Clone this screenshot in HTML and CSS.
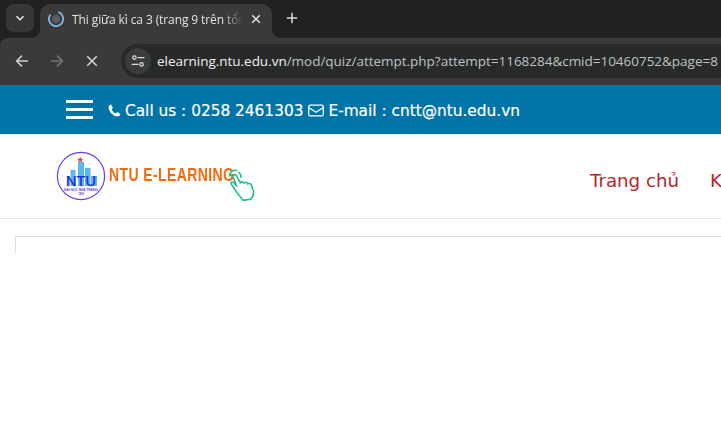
FILE: index.html
```html
<!DOCTYPE html>
<html lang="vi">
<head>
<meta charset="utf-8">
<title>Thi giữa kì ca 3</title>
<link rel="stylesheet" href="styles.css">
</head>
<body>
<div class="chrome">
<div class="tabstrip">
  <div class="tablist-btn">
    <svg width="12" height="12" viewBox="0 0 12 12"><path d="M2.500 4.200 6 7.700l3.500-3.500" fill="none" stroke="#e3e3e3" stroke-width="1.600"/></svg>
  </div>
  <div class="tab">
    <svg class="spinner" width="18" height="18" viewBox="0 0 18 18"><circle cx="9" cy="9" r="4.200" fill="#5a5d61"/><path d="M11.500 2.200A7.200 7.200 0 1 1 3.400 4.500" fill="none" stroke="#8ab4e8" stroke-width="1.800"/></svg>
    <span class="tab-title">Thi giữa kì ca 3 (trang 9 trên tổng</span>
    <svg class="tab-close" width="10" height="10" viewBox="0 0 10 10"><path d="M1.200 1.200l7.600 7.600M8.800 1.200 1.200 8.800" stroke="#e3e3e3" stroke-width="1.500"/></svg>
  </div>
  <svg class="newtab" width="12" height="12" viewBox="0 0 12 12"><path d="M6 .8v10.400M.8 6h10.400" stroke="#dcdcdc" stroke-width="1.500"/></svg>
</div>
<div class="toolbar">
  <svg class="nav" width="14" height="14" viewBox="0 0 14 14"><path d="M13 7H2M7 1.600 1.600 7 7 12.400" fill="none" stroke="#d0d0d0" stroke-width="1.500"/></svg>
  <svg class="nav" width="14" height="14" viewBox="0 0 14 14"><path d="M1 7h11M7 1.600 12.400 7 7 12.400" fill="none" stroke="#757575" stroke-width="1.500"/></svg>
  <svg class="nav" width="14" height="14" viewBox="0 0 14 14"><path d="M2.200 2.200l9.600 9.600M11.800 2.200l-9.600 9.600" stroke="#d0d0d0" stroke-width="1.600"/></svg>
  <div class="omnibox">
    <div class="site-info">
      <svg width="14" height="12" viewBox="0 0 14 12"><circle cx="3.400" cy="2.600" r="1.700" fill="none" stroke="#dedede" stroke-width="1.200"/><path d="M6.600 2.600H13.400M.6 9.400h7" stroke="#dedede" stroke-width="1.400"/><circle cx="10.600" cy="9.400" r="1.700" fill="none" stroke="#dedede" stroke-width="1.200"/></svg>
    </div>
    <div class="url"><span class="host">elearning.ntu.edu.vn</span>/mod/quiz/attempt.php?attempt=1168284&amp;cmid=10460752&amp;page=8</div>
  </div>
</div>
</div>
<div class="topbar">
  <div class="burger"><i></i><i></i><i></i></div>
  <div class="contact">
    <svg width="13" height="13" viewBox="0 0 13 13"><path d="M3.100.6 4.900 3.900 3.600 5.300C4.300 7 5.900 8.700 7.700 9.400l1.400-1.300 3.300 1.800c-.3 1.500-1.300 2.500-2.600 2.600C5.200 12.300.8 7.800.5 3.200.6 1.900 1.600.9 3.100.6Z" fill="#fff"/></svg>
    <span>Call us : 0258 2461303</span>
    <svg class="mail" width="16" height="13" viewBox="0 0 16 13"><rect x=".7" y="1.200" width="14.600" height="10.600" rx="1.500" fill="none" stroke="#fff" stroke-width="1.300"/><path d="M1 3.800 8 8.200l7-4.400" fill="none" stroke="#fff" stroke-width="1.300"/></svg>
    <span>E-mail : cntt@ntu.edu.vn</span>
  </div>
</div>
<header class="site-header">
  <div class="brand">
    <svg class="logo" width="50" height="50" viewBox="0 0 50 50">
      <circle cx="25" cy="25" r="23.600" fill="#fff" stroke="#6a3df0" stroke-width="1.200"/>
      <path d="M24.200 5.500l1 2.200 2.200.2-1.700 1.400.6 2.200-2.100-1.200-2 1.200.6-2.200-1.700-1.400 2.200-.2Z" fill="#e0443a"/>
      <path d="M11 35V25h3v10Z M14.500 35V19H19.500V35Z M22 35V11H28V35Z M29 35V17H34.500V35Z M35 35V25H41V35Z" fill="#5cb8ec"/>
      <text class="logo-ntu" x="25" y="35" text-anchor="middle">NTU</text>
      <text class="logo-name" x="25" y="39.500" text-anchor="middle">ĐẠI HỌC NHA TRANG</text>
      <text class="logo-year" x="25" y="44" text-anchor="middle">1959</text>
    </svg>
    <span class="brand-name">NTU E-LEARNING</span>
    <svg class="hand" width="32" height="34" viewBox="0 0 30 32" fill="none" stroke="#1fbf8c" stroke-width="1.500" stroke-linejoin="round" stroke-linecap="round">
      <path d="M2.500 6.500A5 5 0 0 1 9 1.500M11 3.200A5 5 0 0 1 13 8"/>
      <path d="M10 23 4 14.500c-1-2 1-3 2.500-1.500L9 16 5.500 7.500C5 5 8 4.500 9 6.500l3.500 6.500c.5-1.500 3-1.500 3.500.5.5-1.500 3-1.300 3.500.7.8-1 3-.7 3.500 1.300L25 21c.3 3-1 5.500-2.800 7.500L15 29.500Z"/>
    </svg>
  </div>
  <nav class="menu">
    <a class="menu-item">Trang chủ</a>
    <a class="menu-item">Khóa học</a>
  </nav>
</header>
<main class="content">
  <div class="panel"></div>
</main>
</body>
</html>
```

FILE: styles.css
```css
* { box-sizing: border-box; }
html, body { margin: 0; height: 100%; }
body { width: 721px; height: 440px; overflow: hidden; background: #fff; font-family: "Open Sans", sans-serif; }

.chrome { background: #202222; }
.tabstrip { height: 38px; display: flex; align-items: flex-end; padding-left: 6px; }
.tablist-btn { width: 28px; height: 28px; margin-bottom: 6px; background: #363737; border-radius: 8px; display: flex; align-items: center; justify-content: center; }
.tab { width: 232px; height: 34px; margin-left: 6px; background: #3a3a3a; border-radius: 10px 10px 0 0; display: flex; align-items: center; padding: 0 11px 4px 7px; position: relative; }
.tab::before, .tab::after { content: ""; position: absolute; bottom: 0; width: 8px; height: 8px; }
.tab::before { left: -8px; background: radial-gradient(circle at 0 0, transparent 7.500px, #3a3a3a 8px); }
.tab::after { right: -8px; background: radial-gradient(circle at 100% 0, transparent 7.500px, #3a3a3a 8px); }
.spinner { flex: none; margin-right: 7px; }
.tab-title { flex: 1; min-width: 0; overflow: hidden; white-space: nowrap; color: #e3e3e3; font: 12px "Open Sans", sans-serif; letter-spacing: -.1px; -webkit-mask-image: linear-gradient(to right, #000 88%, transparent); mask-image: linear-gradient(to right, #000 88%, transparent); }
.tab-close { flex: none; margin-left: 8px; }
.newtab { margin: 0 0 14px 14px; }

.toolbar { height: 47px; background: #3a3a3a; border-radius: 8px 0 0 0; display: flex; align-items: flex-start; padding: 6px 0 0 15px; }
.nav { flex: none; margin: 10px 21px 0 0; }
.nav:nth-child(3) { margin-right: 22px; }
.omnibox { flex: 1; height: 34px; background: #282a2a; border-radius: 17px 0 0 17px; display: flex; align-items: center; padding-left: 4px; min-width: 0; }
.site-info { width: 26px; height: 26px; border-radius: 50%; background: #3a3c3c; display: flex; align-items: center; justify-content: center; flex: none; }
.url { margin-left: 6px; white-space: nowrap; color: #bfc2c5; font: 13.5px "Open Sans", sans-serif; letter-spacing: -.02px; }
.host { color: #f0f0f0; }

.topbar { height: 49px; background: #0074a6; display: flex; align-items: center; padding-left: 66px; color: #fff; }
.burger { width: 27px; display: flex; flex-direction: column; gap: 5px; }
.burger i { display: block; height: 3px; background: #fff; }
.contact { margin-left: 15px; padding-top: 2px; display: flex; align-items: center; font: 15.350px "DejaVu Sans", sans-serif; -webkit-text-stroke: .2px #fff; white-space: nowrap; }
.contact span { margin-left: 4px; }
.contact .mail { margin-left: 5px; }

.site-header { height: 85px; border-bottom: 1px solid #e4e4e4; display: flex; align-items: flex-start; box-shadow: inset 0 3px 3px -3px rgba(0,0,0,.12); overflow: hidden; }
.brand { margin: 17px 0 0 56px; width: 200px; display: flex; align-items: flex-start; flex: none; position: relative; }
.logo { flex: none; }
.logo-ntu { font: 14.500px "Liberation Sans", sans-serif; fill: #2222e6; stroke: #2222e6; stroke-width: .25px; }
.logo-name { font: 700 3.200px "Liberation Sans", sans-serif; fill: #5a3fd0; }
.logo-year { font: 700 2.600px "Liberation Sans", sans-serif; fill: #5a3fd0; }
.brand-name { margin: 14px 0 0 3px; font: 700 17.500px "Liberation Sans", sans-serif; color: #f56a0c; letter-spacing: .5px; white-space: nowrap; transform: scaleX(.8); transform-origin: left; }
.hand { position: absolute; left: 171px; top: 18px; }
.menu { margin: 36px 0 0 334px; display: flex; gap: 31px; flex: none; }
.menu-item { color: #b5242c; font: 18.200px "DejaVu Sans", sans-serif; white-space: nowrap; }

.content { padding: 17px 0 0 15px; }
.panel { height: 17px; border: 1px solid #dedede; border-width: 1px 0 0 1px; }
```
